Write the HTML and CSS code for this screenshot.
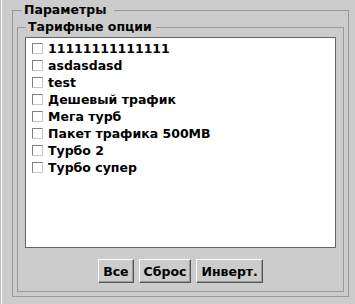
FILE: index.html
```html
<!DOCTYPE html>
<html lang="ru">
<head>
    <meta charset="UTF-8">
    <title>Параметры</title>
    <link rel="stylesheet" href="styles.css">
</head>
<body>
    <div class="panel">
        <div class="group outer">
            <div class="group-title outer-title">Параметры</div>
            <div class="group inner">
                <div class="group-title inner-title">Тарифные опции</div>
                <div class="listbox">
                    <label class="item"><span class="check"></span>11111111111111</label>
                    <label class="item"><span class="check"></span>asdasdasd</label>
                    <label class="item"><span class="check"></span>test</label>
                    <label class="item"><span class="check"></span>Дешевый трафик</label>
                    <label class="item"><span class="check"></span>Мега турб</label>
                    <label class="item"><span class="check"></span>Пакет трафика 500MB</label>
                    <label class="item"><span class="check"></span>Турбо 2</label>
                    <label class="item"><span class="check"></span>Турбо супер</label>
                </div>
                <div class="buttons">
                    <button class="btn">Все</button>
                    <button class="btn">Сброс</button>
                    <button class="btn">Инверт.</button>
                </div>
            </div>
        </div>
    </div>
</body>
</html>
```

FILE: styles.css
```css
/* General */
body {
    margin: 0;
    background: #cccccc;
    font-family: 'DejaVu Sans', sans-serif;
    font-size: 12.5px;
    font-weight: bold;
    color: #000000;
    height: 304px;
    overflow: hidden;
}

.panel {
    height: 304px;
    box-sizing: border-box;
    border-left: 1px solid #bbbbbb;
    padding: 10px 0 0 11px;
    position: relative;
}

.panel::before {
    content: "";
    position: absolute;
    left: 0;
    top: 0;
    bottom: 0;
    width: 1px;
    background: #ffffff;
}

/* Group boxes */
.group {
    border: 1px solid #999999;
    box-sizing: border-box;
}

.group-title {
    align-self: flex-start;
    background: #cccccc;
    padding: 0 6px 0 2px;
    height: 16px;
    line-height: 16px;
    font-size: 12.5px;
}

.outer {
    width: 337px;
    height: 287px;
    padding: 0 4px 4px 4px;
    display: flex;
    flex-direction: column;
}

.outer-title {
    margin: -9px 0 0 5px;
    padding-right: 8px;
}

.inner {
    flex: 1;
    margin-top: 9px;
    padding: 0 7px 7px 7px;
    display: flex;
    flex-direction: column;
}

.inner-title {
    margin: -9px 0 0 1px;
    padding-right: 4px;
}

/* List */
.listbox {
    background: #ffffff;
    border: 1px solid #666666;
    height: 211px;
    flex-shrink: 0;
    box-sizing: border-box;
    margin-top: 2px;
    padding: 2px 6px;
}

.item {
    display: flex;
    align-items: center;
    height: 17px;
    gap: 5px;
}

.check {
    width: 9px;
    height: 9px;
    border: 1px solid;
    border-color: #808080 #c8c8c8 #c8c8c8 #808080;
    background: #ffffff;
}

/* Buttons */
.buttons {
    display: flex;
    justify-content: center;
    gap: 5px;
    margin-top: 11px;
}

.btn {
    font-family: 'DejaVu Sans', sans-serif;
    font-size: 12.5px;
    font-weight: bold;
    height: 24px;
    padding: 0 4px;
    background: #cccccc;
    color: #000000;
    border: 1px solid;
    border-color: #ffffff #555555 #555555 #ffffff;
    box-shadow: inset -1px -1px 0 #999999;
}
```
